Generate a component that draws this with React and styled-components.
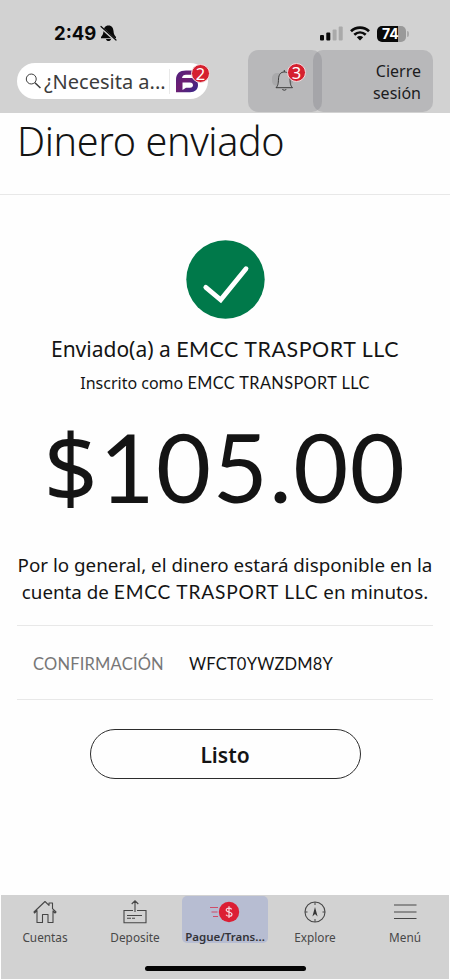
import { useState } from 'react';
import styled, { createGlobalStyle } from 'styled-components';

const GlobalStyle = createGlobalStyle`
  * {
    box-sizing: border-box;
  }

  body {
    margin: 0;
    background: #fefefe;
    color: #141414;
    font-family: "Noto Sans", "Liberation Sans", sans-serif;
  }

  button {
    border: 0;
    padding: 0;
    background: none;
    color: inherit;
    font: inherit;
    cursor: pointer;
  }
`;

const tabs = [
  { id: 'cuentas', label: 'Cuentas', icon: HomeIcon },
  { id: 'deposite', label: 'Deposite', icon: DepositIcon },
  { id: 'pague', label: 'Pague/Trans...', icon: PayIcon },
  { id: 'explore', label: 'Explore', icon: CompassIcon },
  { id: 'menu', label: 'Menú', icon: MenuIcon },
];

const App = () => {

  const [tab, setTab] = useState('pague');

  return (
    <Wrapper>
      <GlobalStyle />
      <Header>
        <StatusBar>
          <Clock>
            2:49
            <MutedIcon />
          </Clock>
          <Signals>
            <CellIcon />
            <WifiIcon />
            <Battery>74</Battery>
          </Signals>
        </StatusBar>
        <Toolbar>
          <Search>
            <SearchIcon />
            <SearchText>¿Necesita a...</SearchText>
            <Assistant>
              <AssistantIcon />
              <Badge $top={-5} $right={-2}>2</Badge>
            </Assistant>
          </Search>
          <BellButton>
            <BellIcon />
            <Badge $top={13} $right={16}>3</Badge>
          </BellButton>
          <SignOff>Cierre<br />sesión</SignOff>
        </Toolbar>
      </Header>

      <Title>Dinero enviado</Title>

      <Main>
        <CheckIcon />
        <Recipient>Enviado(a) a <Company $tracking={0.55}>EMCC TRASPORT LLC</Company></Recipient>
        <Registered>Inscrito como <Company $tracking={0.4}>EMCC TRANSPORT LLC</Company></Registered>
        <Amount><Currency>$</Currency>105.00</Amount>
        <Note>
          Por lo general, el dinero estará disponible en la
          <br />
          cuenta de <Company $tracking={0.8}>EMCC TRASPORT LLC</Company> en minutos.
        </Note>
        <Confirmation>
          <dt>CONFIRMACIÓN</dt>
          <dd>WFCT0YWZDM8Y</dd>
        </Confirmation>
        <DoneButton>Listo</DoneButton>
      </Main>

      <Footer>
        <TabBar>
          {tabs.map(({ id, label, icon: Icon }) => (
            <Tab key={id} $active={tab === id} onClick={() => setTab(id)}>
              <Icon />
              <span>{label}</span>
            </Tab>
          ))}
        </TabBar>
        <HomeIndicator />
      </Footer>
    </Wrapper>
  );
};

export default App;

function MutedIcon() {
  return (
    <svg width="17" height="17" viewBox="0 0 17 17">
      <path d="M8.500 0.500C5 0.500 3.700 3 3.500 6C3.300 9 2.500 10.500 1 12V13.200H16V12C14.500 10.500 13.700 9 13.500 6C13.300 3 12 0.500 8.500 0.500ZM6 14H11C10.500 16.700 6.500 16.700 6 14Z" fill="#090909" />
      <path d="M0.500 2L15.500 15.500" stroke="#d2d2d2" strokeWidth="2.400" />
      <path d="M1 1.500L16 15" stroke="#090909" strokeWidth="1.200" strokeLinecap="round" />
    </svg>
  );
}

function CellIcon() {
  return (
    <svg width="23" height="15" viewBox="0 0 23 15">
      <rect x="0" y="9" width="4" height="5.500" rx="1" fill="#090909" />
      <rect x="6.300" y="6.500" width="4" height="8" rx="1" fill="#090909" />
      <rect x="12.600" y="3.500" width="4" height="11" rx="1" fill="#aaa" />
      <rect x="18.700" y="0.500" width="4" height="14" rx="1" fill="#aaa" />
    </svg>
  );
}

function WifiIcon() {
  return (
    <svg width="20" height="15" viewBox="0 0 20 15" fill="none" stroke="#090909" strokeWidth="2.700">
      <path d="M1 5.200C6 0.400 14 0.400 19 5.200" />
      <path d="M4.300 8.800C7.700 5.700 12.300 5.700 15.700 8.800" />
      <path d="M10 14.500L6.800 11.300C8.500 9.700 11.500 9.700 13.200 11.300Z" fill="#090909" stroke="none" />
    </svg>
  );
}

function SearchIcon() {
  return (
    <svg width="17" height="17" viewBox="0 0 17 17" fill="none" stroke="#3c3c3c">
      <circle cx="6.300" cy="6" r="5" strokeWidth="1" />
      <path d="M10 9.700L15.500 15" strokeWidth="1.500" />
    </svg>
  );
}

function AssistantIcon() {
  return (
    <svg width="25" height="24" viewBox="0 0 25 24">
      <defs>
        <linearGradient id="assistant" x1="0" y1="0" x2="1" y2="1">
          <stop offset="0" stopColor="#4d217f" />
          <stop offset="0.450" stopColor="#6f1e72" />
          <stop offset="1" stopColor="#35298b" />
        </linearGradient>
      </defs>
      <path d="M11 1.500H22V5.800H11C8.500 5.800 7.500 7 7 9H15C20 9 23 11.500 23 16C23 20.500 20 23.200 15 23.200H1V11C1 4.500 4.500 1.500 11 1.500Z" fill="url(#assistant)" />
      <path d="M7.500 13.500H15C19 13.500 19 18.800 15 18.800H11L7.500 21Z" fill="#fff" />
    </svg>
  );
}

function BellIcon() {
  return (
    <svg width="24" height="24" viewBox="0 0 24 24">
      <rect x="0" y="4" width="21" height="13" rx="5" fill="#a9a9ab" />
      <path d="M4 18.700H20.500C18.500 16.500 18.200 15 18 10C17.700 5 15.500 3 12.300 3C9 3 6.800 5 6.500 10C6.300 15 6 16.500 4 18.700ZM12.300 3V1" fill="#b9b9bb" stroke="#3b3b3b" strokeWidth="1" />
      <path d="M10.300 20.500Q12.300 22 14.300 20.500" fill="none" stroke="#3b3b3b" />
    </svg>
  );
}

function CheckIcon() {
  return (
    <svg width="79" height="79" viewBox="0 0 79 79">
      <circle cx="39.500" cy="39.500" r="39.200" fill="#00794a" />
      <path d="M19.800 47.300L34.700 59.800L60 28.700" fill="none" stroke="#fff" strokeWidth="4.800" strokeLinecap="round" />
    </svg>
  );
}

function HomeIcon() {
  return (
    <svg width="24" height="24" viewBox="0 0 24 24" fill="none" stroke="#464646" strokeWidth="1.100" strokeLinejoin="round">
      <path d="M4 10.500L1.500 13L1 12L12 1.500L16 5.300V3H19.500V8.700L23 12L22 13L20 11V22.500H15V14.500H9.500V22.500H4Z" />
    </svg>
  );
}

function DepositIcon() {
  return (
    <svg width="24" height="24" viewBox="0 0 24 24" fill="none" stroke="#464646" strokeWidth="1.100">
      <path d="M10 10.500H1V22.700H23V10.500H14M12 12V1M8.700 4L12 0.800L15.300 4M4 15.500H19M4 18.200H8M9 18.200H12" />
    </svg>
  );
}

function PayIcon() {
  return (
    <svg width="30" height="24" viewBox="0 0 30 24">
      <circle cx="19" cy="12" r="10.200" fill="#dc1e34" />
      <path d="M0 7.500H8M1.500 12H7.500M3 16.500H8" stroke="#ce4d69" strokeWidth="1.100" />
      <path d="M21.700 9.300C20.500 7.700 16.300 7.600 16.200 9.900C16.200 12.600 22 11.400 22 14.200C22 16.800 17.300 16.800 16 14.700M19 6.200V17.900" fill="none" stroke="#f5d7df" strokeWidth="1.200" />
    </svg>
  );
}

function CompassIcon() {
  return (
    <svg width="24" height="24" viewBox="0 0 24 24" fill="none" stroke="#464646">
      <circle cx="12" cy="12" r="10" strokeWidth="1.100" />
      <path d="M12 2V5M12 19V22M2 12H4.500M19.500 12H22" />
      <path d="M12 7L14.600 16.500L12 14L9.400 16.500Z" fill="#363636" stroke="none" />
    </svg>
  );
}

function MenuIcon() {
  return (
    <svg width="24" height="24" viewBox="0 0 24 24" stroke="#464646" strokeWidth="1.200">
      <path d="M1 5H23.500M1 12H23.500M1 18.500H23.500" />
    </svg>
  );
}

const Wrapper = styled.div`
  display: flex;
  flex-direction: column;
  height: 980px;
  width: 450px;
  overflow: hidden;
  white-space: nowrap;
`;

const Header = styled.header`
  height: 113px;
  background: #d2d2d2;
`;

const StatusBar = styled.div`
  display: flex;
  justify-content: space-between;
  height: 50px;
  padding: 22px 41px 0 54px;
`;

const Clock = styled.div`
  display: flex;
  align-items: center;
  gap: 4px;
  height: 23px;
  color: #090909;
  font: 700 18.500px/23px Inter, sans-serif;
`;

const Signals = styled.div`
  display: flex;
  align-items: center;
  gap: 7px;
  height: 23px;
`;

const Battery = styled.div`
  position: relative;
  width: 29px;
  height: 16px;
  margin-right: 3px;
  padding-left: 5px;
  border-radius: 5px;
  background: linear-gradient(90deg, #090909 74%, #999 74%);
  color: #fff;
  font: 700 14px/16px Inter, sans-serif;

  &::after {
    content: "";
    position: absolute;
    top: 5px;
    right: -3px;
    width: 2px;
    height: 6px;
    border-radius: 0 2px 2px 0;
    background: #aaa;
  }
`;

const Toolbar = styled.div`
  display: flex;
  height: 62px;
  padding-left: 17px;
`;

const Search = styled.div`
  display: flex;
  align-items: center;
  width: 191px;
  height: 36px;
  margin: 13px 40px 0 0;
  padding-left: 8px;
  border-radius: 18px;
  background: #fff;
`;

const SearchText = styled.span`
  width: 125px;
  margin-left: 2px;
  padding-top: 2px;
  color: #3c3c3c;
  font-size: 20px;
  line-height: 36px;
`;

const Assistant = styled.div`
  position: relative;
  display: flex;
  align-items: center;
  width: 39px;
  height: 25px;
  margin-left: 1px;
  padding-left: 5px;
  border-left: 1px solid #e9e9e9;
`;

const Badge = styled.span`
  position: absolute;
  top: ${({ $top }) => $top}px;
  right: ${({ $right }) => $right}px;
  width: 19px;
  height: 19px;
  border: 1px solid #f3dadd;
  border-radius: 50%;
  background: #d5202f;
  color: #fff;
  font-size: 16.500px;
  line-height: 18px;
  text-align: center;
`;

const BellButton = styled.button`
  position: relative;
  display: flex;
  align-items: center;
  width: 74px;
  height: 62px;
  padding-left: 24px;
  border-radius: 10px;
  background: rgba(118, 118, 126, 0.280);
`;

const SignOff = styled.button`
  width: 120px;
  height: 62px;
  margin-left: -9px;
  padding: 2px 12px 0 0;
  border-radius: 10px;
  background: rgba(118, 118, 126, 0.280);
  color: #1c1c1e;
  font-size: 16px;
  line-height: 22.500px;
  text-align: right;
`;

const Title = styled.h1`
  height: 82px;
  margin: 0;
  padding-left: 17px;
  border-bottom: 1px solid #e8e8e8;
  font-size: 39.500px;
  font-weight: 300;
  line-height: 56px;
  letter-spacing: -0.350px;
`;

const Main = styled.main`
  display: flex;
  flex: 1;
  flex-direction: column;
  align-items: center;
  padding: 45px 17px 0;
`;

const Company = styled.span`
  font-family: Lato, "Noto Sans", sans-serif;
  font-size: 1.020em;
  letter-spacing: ${({ $tracking }) => $tracking}px;
`;

const Recipient = styled.h2`
  margin: 16px 0 0;
  font-size: 21px;
  font-weight: 400;
  line-height: 28px;
`;

const Registered = styled.p`
  margin: 8px 0 0;
  font-size: 16px;
  line-height: 24px;
`;

const Amount = styled.div`
  height: 110px;
  margin: 16px 0 0;
  font-family: Lato, sans-serif;
  font-size: 95px;
  line-height: 110px;
  letter-spacing: 1.500px;
`;

const Currency = styled.span`
  font-family: "Noto Sans", sans-serif;
  line-height: 1;
`;

const Note = styled.p`
  margin: 31px 0 0;
  font-size: 18.800px;
  line-height: 26.500px;
  text-align: center;
`;

const Confirmation = styled.dl`
  display: flex;
  align-items: center;
  gap: 25px;
  width: 100%;
  height: 75px;
  margin: 20px 0 29px;
  padding: 2px 0 0 16px;
  border-top: 1px solid #e8e8e8;
  border-bottom: 1px solid #e8e8e8;
  font-family: Lato, "Noto Sans", sans-serif;
  font-size: 16.500px;

  dt {
    width: 131px;
    color: #777;
    letter-spacing: 0.200px;
  }

  dd {
    margin: 0;
    letter-spacing: 0.200px;
  }
`;

const DoneButton = styled.button`
  width: 271px;
  height: 50px;
  padding-top: 2px;
  border: 1px solid #2c2c2c;
  border-radius: 25px;
  font-size: 21px;
  font-weight: 600;
`;

const Footer = styled.footer`
  height: 84px;
  margin: 0 1px 1px;
  padding-top: 1px;
  background: #d2d2d2;
`;

const TabBar = styled.nav`
  display: grid;
  grid-template-columns: repeat(5, 90px);
  justify-content: center;
  height: 69px;
`;

const Tab = styled.button`
  display: flex;
  flex-direction: column;
  align-items: center;
  justify-self: center;
  width: 86px;
  height: 47px;
  padding-top: 4px;
  border-radius: 5px;
  background: ${({ $active }) => ($active ? '#b7bdd2' : 'transparent')};
  color: ${({ $active }) => ($active ? '#333338' : '#484848')};
  font-size: ${({ $active }) => ($active ? 11.5 : 11.8)}px;
  font-weight: ${({ $active }) => ($active ? 600 : 400)};
  line-height: 16px;

  svg {
    flex-shrink: 0;
  }

  span {
    margin-top: 5px;
  }
`;

const HomeIndicator = styled.div`
  width: 161px;
  height: 5px;
  margin: 1px auto 0;
  border-radius: 3px;
  background: #050505;
`;
